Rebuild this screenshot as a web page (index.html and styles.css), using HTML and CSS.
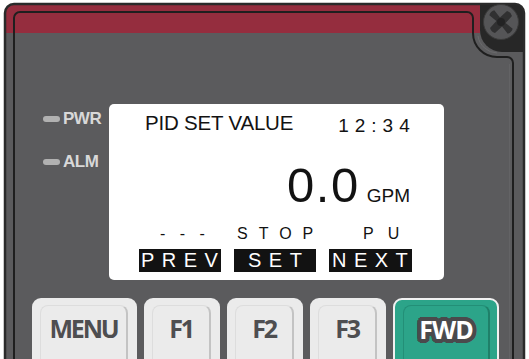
FILE: index.html
```html
<!DOCTYPE html>
<html>
<head>
<meta charset="utf-8">
<link rel="stylesheet" href="styles.css">
</head>
<body>
<div class="device">
  <svg class="frame" width="529" height="359" viewBox="0 0 529 359">
    <defs>
      <clipPath id="outer"><rect x="5" y="4" width="519" height="400" rx="9"/></clipPath>
    </defs>
    <rect x="5" y="4" width="519" height="400" rx="9" fill="#5b5b5d"/>
    <g clip-path="url(#outer)">
      <rect x="0" y="0" width="480" height="33" fill="#952d3e"/>
      <path d="M480 0 H529 V52 H502 A22 22 0 0 1 480 30 Z" fill="#272727"/>
    </g>
    <rect x="5" y="4" width="519" height="400" rx="9" fill="none" stroke="#2a2a2a" stroke-width="2.5"/>
    <path d="M14 400 V18 A6 6 0 0 1 20 12 H467 A6 6 0 0 1 473 18 V33 A24 24 0 0 0 497 57 H507 A6 6 0 0 1 513 63 V400" fill="none" stroke="#1f1f1f" stroke-width="2"/>
    <path d="M478 36 A20 20 0 0 0 497 53" fill="none" stroke="#6a6a6c" stroke-width="1"/>
    <line x1="509.5" y1="64" x2="509.5" y2="359" stroke="#636365" stroke-width="1"/>
    <circle cx="501" cy="22" r="17.5" fill="#555557" stroke="#3a3a3a" stroke-width="1"/>
    <g transform="rotate(45 501 22)" fill="#303031">
      <path d="M488 18.5 L497 19.5 L497.5 10 Q501 8 504.5 10 L505 19.5 L514 18.5 Q516 22 514 25.5 L505 24.5 L504.5 34 Q501 36 497.5 34 L497 24.5 L488 25.5 Q486 22 488 18.5 Z"/>
    </g>
    <circle cx="501" cy="22" r="4" fill="#222223"/>
  </svg>

  <div class="content">
    <div class="display-row">
      <div class="leds">
        <div class="led-row"><span class="led"></span><span class="led-label">PWR</span></div>
        <div class="led-row"><span class="led"></span><span class="led-label">ALM</span></div>
      </div>
      <div class="screen">
        <div class="header">
          <span class="title">PID SET VALUE</span>
          <span class="time">12:34</span>
        </div>
        <div class="value-row">
          <span class="big">0.0</span>
          <span class="unit">GPM</span>
        </div>
        <div class="status-row">
          <span class="st st-dash">- - -</span>
          <span class="st st-stop">STOP</span>
          <span class="st st-pu">PU</span>
        </div>
        <div class="label-row">
          <span class="lbl lbl-prev">PREV</span>
          <span class="lbl lbl-set">SET</span>
          <span class="lbl lbl-next">NEXT</span>
        </div>
      </div>
    </div>

    <div class="keys">
      <div class="key key-menu"><div class="key-face">MENU</div></div>
      <div class="key key-f"><div class="key-face">F1</div></div>
      <div class="key key-f"><div class="key-face">F2</div></div>
      <div class="key key-f"><div class="key-face">F3</div></div>
      <div class="key key-fwd"><div class="key-face">FWD</div></div>
    </div>
  </div>
</div>
</body>
</html>
```

FILE: styles.css
```css
* { box-sizing: border-box; }

html, body {
  margin: 0;
  padding: 0;
  background: #ffffff;
  overflow: hidden;
}

.device {
  position: relative;
  width: 529px;
  height: 359px;
  overflow: hidden;
}

.frame {
  position: absolute;
  left: 0;
  top: 0;
}

.content {
  position: relative;
  padding-top: 104px;
}

.display-row {
  display: flex;
  height: 176px;
}

.leds {
  width: 109px;
  padding-left: 43px;
  padding-top: 4px;
  display: flex;
  flex-direction: column;
  gap: 21px;
}

.led-row {
  display: flex;
  align-items: center;
  height: 22px;
  gap: 3px;
}

.led {
  width: 17px;
  height: 6px;
  border-radius: 3px;
  background: #b1b1b1;
}

.led-label {
  font-family: "Liberation Sans", Arial, sans-serif;
  font-weight: bold;
  font-size: 17px;
  line-height: 22px;
  letter-spacing: -0.5px;
  color: #d8d8d8;
}

.screen {
  width: 335px;
  height: 176px;
  background: #ffffff;
  border-radius: 5px;
  padding-top: 9px;
  font-family: "Liberation Sans", Arial, sans-serif;
  color: #121212;
}

.header {
  display: flex;
  align-items: flex-start;
  height: 20px;
  padding-left: 36px;
}

.title {
  font-size: 20.5px;
  line-height: 20px;
  letter-spacing: -0.2px;
}

.time {
  font-size: 19px;
  line-height: 20px;
  letter-spacing: 6px;
  margin-left: 45px;
  margin-top: 3px;
}

.value-row {
  display: flex;
  justify-content: flex-end;
  align-items: baseline;
  gap: 7px;
  margin-top: 29px;
  padding-right: 34px;
  height: 47px;
}

.big {
  font-size: 49px;
  line-height: 47px;
  letter-spacing: 1.5px;
}

.unit {
  font-size: 19px;
  line-height: 18px;
}

.status-row {
  display: grid;
  grid-template-columns: 82px 82px 83px;
  column-gap: 13px;
  padding-left: 30px;
  margin-top: 17px;
  height: 16px;
}

.st {
  font-size: 16px;
  line-height: 16px;
  white-space: nowrap;
}

.st-dash { padding-left: 21px; letter-spacing: 5px; }
.st-stop { padding-left: 3px; letter-spacing: 11px; }
.st-pu { padding-left: 34px; letter-spacing: 14px; }

.label-row {
  display: grid;
  grid-template-columns: 82px 82px 83px;
  column-gap: 13px;
  padding-left: 30px;
  margin-top: 7px;
}

.lbl {
  display: block;
  height: 23px;
  background: #121212;
  color: #ffffff;
  font-size: 20px;
  line-height: 23px;
  letter-spacing: 7.5px;
  white-space: nowrap;
}

.lbl-prev { padding-left: 2px; }
.lbl-set { padding-left: 14px; }
.lbl-next { padding-left: 3px; }

.keys {
  display: flex;
  gap: 7px;
  padding-left: 32px;
  margin-top: 18px;
}

.key {
  height: 80px;
  background: #ebebeb;
  border-radius: 9px;
  padding: 7px 9px 0 8px;
}

.key-menu { width: 105px; }
.key-f { width: 76px; }
.key-fwd { width: 106px; }

.key-face {
  height: 100%;
  border-radius: 8px;
  border: 1px solid #dddddd;
  border-right: 2px solid #c3c3c3;
  text-align: center;
  padding-top: 10px;
  font-family: "Open Sans", "Noto Sans", sans-serif;
  font-weight: 700;
  font-size: 25px;
  line-height: 24px;
  letter-spacing: -2.2px;
  color: #4e4e50;
}

.key-fwd {
  background: #2ca489;
  border: 2px solid #f1f1f1;
  padding: 5px 7px 0 8px;
}

.key-fwd .key-face {
  border: 1.5px solid #238f77;
  border-right: 2px solid #1f8069;
  color: #ffffff;
  font-size: 25px;
  letter-spacing: -1px;
  padding-top: 11px;
  text-shadow:
    4px 0 0 #4a4a4c, -4px 0 0 #4a4a4c, 0 4px 0 #4a4a4c, 0 -4px 0 #4a4a4c,
    3px 3px 0 #4a4a4c, -3px 3px 0 #4a4a4c, 3px -3px 0 #4a4a4c, -3px -3px 0 #4a4a4c,
    4px 1.5px 0 #4a4a4c, 4px -1.5px 0 #4a4a4c, -4px 1.5px 0 #4a4a4c, -4px -1.5px 0 #4a4a4c,
    1.5px 4px 0 #4a4a4c, -1.5px 4px 0 #4a4a4c, 1.5px -4px 0 #4a4a4c, -1.5px -4px 0 #4a4a4c,
    2px 0 0 #4a4a4c, -2px 0 0 #4a4a4c, 0 2px 0 #4a4a4c, 0 -2px 0 #4a4a4c;
}
```
